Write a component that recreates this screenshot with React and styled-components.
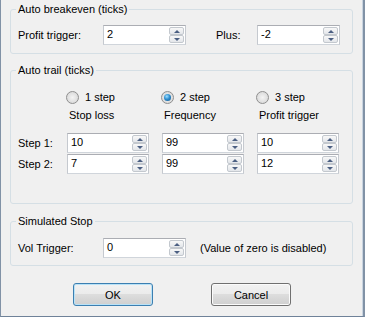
import React from "react";
import styled, { createGlobalStyle } from "styled-components";

const GlobalStyle = createGlobalStyle`
  html, body { margin: 0; padding: 0; background: #f0f0f0; }
  body {
    font-family: "Liberation Sans", Arial, sans-serif;
    font-size: 11px;
    color: #000;
  }
  * { box-sizing: border-box; }
`;

const Window = styled.div`
  width: 365px;
  height: 317px;
  background: #f0f0f0;
  border-left: 1px solid #8192a6;
  border-bottom: 1px solid #6f8299;
  border-right: 2px solid #8192a6;
  box-shadow: inset -1px 0 0 #c9d4e0;
  padding: 3px 0 0 9px;
  display: flex;
  flex-direction: column;
`;

const Group = styled.fieldset`
  margin: ${(p) => p.$top}px 0 0;
  padding: ${(p) => p.$pad};
  width: 343px;
  min-width: 0;
  border: 1px solid #d5dfe5;
  border-radius: 3px;
`;

const Legend = styled.legend`
  margin-left: -2px;
  padding: 0 2px;
  line-height: 13px;
  font-size: 11px;
`;

const Row = styled.div`
  display: flex;
  align-items: center;
  height: 20px;
`;

const Label = styled.span`
  flex: none;
  width: ${(p) => p.$w}px;
  margin-left: ${(p) => p.$ml || 0}px;
  white-space: nowrap;
`;

const Note = styled.span`
  margin-left: 14px;
  white-space: nowrap;
`;

const SpinBox = styled.div`
  flex: none;
  display: flex;
  width: ${(p) => p.$w}px;
  height: 20px;
  border: 1px solid #abadb3;
  border-color: #abadb3 #c5c9cf #d0d5db #c5c9cf;
  background: #fff;
  padding: 1px;
`;

const Value = styled.span`
  flex: 1;
  padding-left: 2px;
  line-height: 15px;
`;

const Spin = styled.div`
  flex: none;
  display: flex;
  flex-direction: column;
  width: 15px;
`;

const SpinBtn = styled.div`
  flex: 1;
  display: flex;
  align-items: center;
  justify-content: center;
  border: 1px solid #c3c8ce;
  border-radius: 2px;
  background: linear-gradient(#f8f8f8, #e3e6ea);
`;

const Arrow = styled.span`
  width: 0;
  height: 0;
  border-left: 3px solid transparent;
  border-right: 3px solid transparent;
  ${(p) =>
    p.$up
      ? "border-bottom: 3px solid #4b5f82;"
      : "border-top: 3px solid #4b5f82;"}
`;

const TrailRow = styled.div`
  display: grid;
  grid-template-columns: 36px repeat(3, 82px);
  column-gap: 13px;
  align-items: center;
  height: ${(p) => p.$h}px;
  margin-top: ${(p) => p.$mt || 0}px;
`;

const RadioItem = styled.label`
  display: flex;
  align-items: center;
  gap: 6px;
  margin-left: -1px;
  line-height: 13px;
`;

const RadioDot = styled.span`
  flex: none;
  width: 13px;
  height: 13px;
  border-radius: 50%;
  border: 1px solid #8f8f8f;
  background: radial-gradient(circle at 50% 50%, #f4f4f4 0, #dcdcdc 70%, #cfcfcf 100%);
  display: flex;
  align-items: center;
  justify-content: center;
  &::after {
    content: "";
    width: 7px;
    height: 7px;
    border-radius: 50%;
    display: ${(p) => (p.$on ? "block" : "none")};
    background: radial-gradient(circle at 40% 35%, #9fe0ff 0, #2f8fd0 45%, #0f4f86 100%);
  }
`;

const ColHead = styled.span`
  padding-left: 2px;
  line-height: 13px;
  white-space: nowrap;
`;

const ButtonRow = styled.div`
  display: flex;
  gap: 58px;
  margin-top: 17px;
  padding-left: 63px;
`;

const Button = styled.button`
  width: 80px;
  height: 23px;
  padding: 0;
  font-family: "Liberation Sans", Arial, sans-serif;
  font-size: 11px;
  color: #000;
  border: 1px solid ${(p) => (p.$default ? "#3c7fb1" : "#707070")};
  border-radius: 3px;
  background: linear-gradient(#f2f2f2 0%, #ebebeb 49%, #dddddd 50%, #cfcfcf 100%);
  box-shadow: inset 0 0 0 1px ${(p) => (p.$default ? "#b9e2f7" : "#fbfbfb")};
`;

function NumBox({ value, w = 82 }) {
  return (
    <SpinBox $w={w}>
      <Value>{value}</Value>
      <Spin>
        <SpinBtn>
          <Arrow $up />
        </SpinBtn>
        <SpinBtn>
          <Arrow />
        </SpinBtn>
      </Spin>
    </SpinBox>
  );
}

const steps = [
  { label: "Step 1:", values: ["10", "99", "10"] },
  { label: "Step 2:", values: ["7", "99", "12"] },
];

export default function App() {
  return (
    <>
      <GlobalStyle />
      <Window>
        <Group $top={0} $pad="9px 7px 8px">
          <Legend>Auto breakeven (ticks)</Legend>
          <Row>
            <Label $w={85}>Profit trigger:</Label>
            <NumBox value="2" w={83} />
            <Label $w={41} $ml={30}>Plus:</Label>
            <NumBox value="-2" w={83} />
          </Row>
        </Group>

        <Group $top={10} $pad="14px 7px 29px">
          <Legend>Auto trail (ticks)</Legend>
          <TrailRow $h={13}>
            <span />
            <RadioItem>
              <RadioDot />1 step
            </RadioItem>
            <RadioItem>
              <RadioDot $on />2 step
            </RadioItem>
            <RadioItem>
              <RadioDot />3 step
            </RadioItem>
          </TrailRow>
          <TrailRow $h={13} $mt={5}>
            <span />
            <ColHead>Stop loss</ColHead>
            <ColHead>Frequency</ColHead>
            <ColHead>Profit trigger</ColHead>
          </TrailRow>
          {steps.map((s, i) => (
            <TrailRow key={s.label} $h={20} $mt={i === 0 ? 11 : 1}>
              <span>{s.label}</span>
              {s.values.map((v, j) => (
                <NumBox key={j} value={v} />
              ))}
            </TrailRow>
          ))}
        </Group>

        <Group $top={11} $pad="10px 7px 7px">
          <Legend>Simulated Stop</Legend>
          <Row>
            <Label $w={85}>Vol Trigger:</Label>
            <NumBox value="0" w={83} />
            <Note>(Value of zero is disabled)</Note>
          </Row>
        </Group>

        <ButtonRow>
          <Button $default>OK</Button>
          <Button>Cancel</Button>
        </ButtonRow>
      </Window>
    </>
  );
}
